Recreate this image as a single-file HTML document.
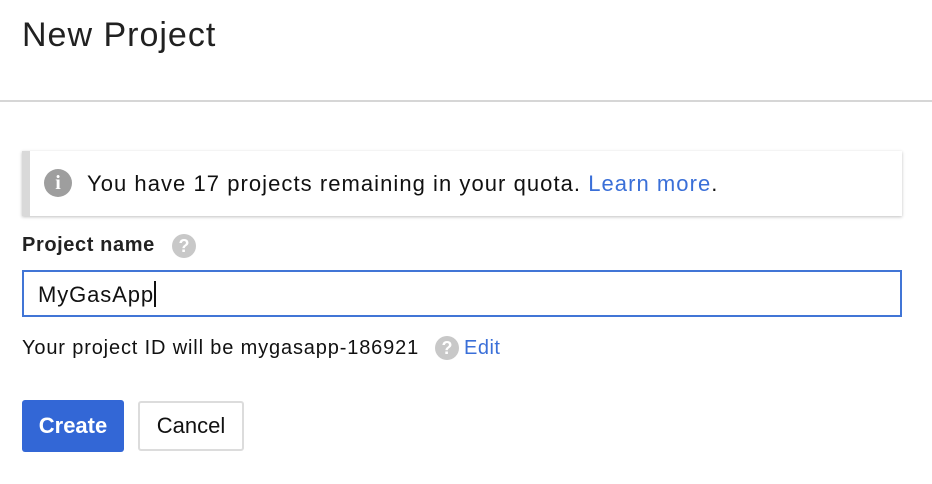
<!DOCTYPE html>
<html><head><style>
body{margin:0;width:932px;height:484px;background:#fff;font-family:"Liberation Sans",Arial,sans-serif;color:#212121;position:relative;overflow:hidden}
.a{position:absolute;white-space:nowrap}
.q{display:inline-block;border-radius:50%;background:#c8c8c8;color:#fff;font-weight:bold;text-align:center}
</style></head><body>
<div class="a" style="left:22px;top:16px;font-size:34px;letter-spacing:1px;color:#212121">New Project</div>
<div class="a" style="left:0;top:100px;width:932px;height:2px;background:#d6d6d6"></div>
<div class="a" style="left:22px;top:151px;width:880px;height:65px;background:#fff;box-shadow:0 1px 3px rgba(0,0,0,.25);border-left:8px solid #d9d9d9;box-sizing:border-box"></div>
<div class="a" style="left:44px;top:169px;width:28px;height:28px;border-radius:50%;background:#9e9e9e;color:#fff;font-weight:bold;font-size:20px;text-align:center;line-height:28px;font-family:'Liberation Serif',serif">i</div>
<div class="a" style="left:87px;top:171px;font-size:22px;letter-spacing:1.05px;color:#111">You have 17 projects remaining in your quota. <span style="color:#3a6fd8">Learn more</span>.</div>
<div class="a" style="left:22px;top:234px;font-size:20px;letter-spacing:0.6px;font-weight:bold;color:#222">Project name</div>
<div class="a q" style="left:172px;top:234px;width:24px;height:24px;line-height:24px;font-size:18px">?</div>
<div class="a" style="left:22px;top:270px;width:880px;height:47px;border:2px solid #4175d6;box-sizing:border-box"></div>
<div class="a" style="left:38px;top:281px;font-size:22px;letter-spacing:0.9px;color:#111">MyGasApp<span style="display:inline-block;width:2px;height:26px;background:#111;vertical-align:-5px"></span></div>
<div class="a" style="left:22px;top:337px;font-size:20px;letter-spacing:0.85px;color:#111">Your project ID will be mygasapp-186921</div>
<div class="a q" style="left:435px;top:336px;width:24px;height:24px;line-height:24px;font-size:18px">?</div>
<div class="a" style="left:464px;top:337px;font-size:20px;letter-spacing:0.5px;color:#3a6fd8">Edit</div>
<div class="a" style="left:22px;top:400px;width:102px;height:52px;background:#3367d6;border-radius:3px;color:#fff;font-weight:bold;font-size:22px;text-align:center;line-height:52px">Create</div>
<div class="a" style="left:138px;top:401px;width:106px;height:50px;border:2px solid #dcdcdc;border-radius:3px;box-sizing:border-box;color:#111;font-size:22px;text-align:center;line-height:46px">Cancel</div>
</body></html>
